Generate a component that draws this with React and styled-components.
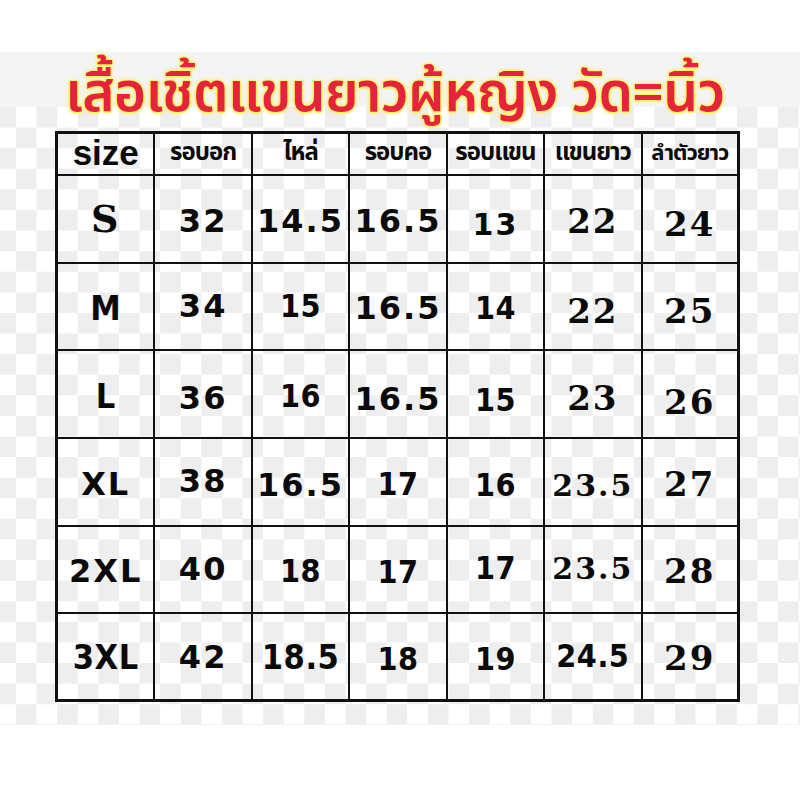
import React from 'react'
import styled, { createGlobalStyle } from 'styled-components'

const GlobalStyle = createGlobalStyle`
  html, body {
    margin: 0;
    padding: 0;
    background: #fff;
  }
`

const Page = styled.div`
  width: 800px;
  height: 800px;
  padding-top: 52px;
  box-sizing: border-box;
  background: #fff;
`

const Sheet = styled.div`
  height: 673px;
  box-sizing: border-box;
  border-bottom: 1px solid #f2f2f2;
  background-color: #fff;
  background-image:
    linear-gradient(#f4f4f4, #f4f4f4),
    repeating-conic-gradient(#fff 0 25%, #eeeeee 0 50%);
  background-size: 100% 55px, 41.2px 41.2px;
  background-position: 0 0, -4.6px 55px;
  background-repeat: no-repeat, repeat;
`

const Title = styled.h1`
  margin: 0;
  height: 79px;
  padding-right: 10px;
  box-sizing: border-box;
  text-align: center;
  font-family: "Noto Sans Thai", "Noto Sans", "DejaVu Sans", sans-serif;
  font-weight: 600;
  font-size: 55px;
  letter-spacing: -0.6px;
  line-height: 86px;
  color: #e5243b;
  text-shadow:
    1.5px 0 0 #fff36b, -1.5px 0 0 #fff36b,
    0 1.5px 0 #fff36b, 0 -1.5px 0 #fff36b,
    0 0 5px #ffe94a;
`

const Table = styled.div`
  margin-left: 55px;
  width: 685px;
  height: 571px;
  box-sizing: border-box;
  display: grid;
  grid-template-columns: repeat(7, 1fr);
  grid-template-rows: 42px repeat(6, 1fr);
  border-top: 3px solid #111;
  border-left: 3px solid #111;
`

const Cell = styled.div`
  display: flex;
  align-items: center;
  justify-content: center;
  box-sizing: border-box;
  border-right: ${p => (p.$last ? 3 : 2.5)}px solid #111;
  border-bottom: ${p => (p.$bottom ? 3 : 2.5)}px solid #111;
  color: #0a0a0a;
  white-space: nowrap;
  overflow: visible;
`

const HeadText = styled.span`
  font-family: "Noto Sans Thai", "Noto Sans", "DejaVu Sans", sans-serif;
  font-weight: 700;
  font-size: ${p => p.$size || 24}px;
  letter-spacing: -1px;
  transform: translateY(-1px);
`

const SizeHead = styled.span`
  font-family: "Liberation Sans", Arial, sans-serif;
  font-weight: 700;
  font-size: 35px;
  transform: translateY(-1px);
`

const faces = {
  wide: `font-family: "DejaVu Sans", sans-serif; letter-spacing: 2px;`,
  narrow: `font-family: "DejaVu Sans Condensed", "DejaVu Sans", sans-serif; letter-spacing: 0.5px;`,
  serif: `font-family: "DejaVu Serif", serif; letter-spacing: 2px;`,
}

const Value = styled.span`
  ${p => faces[p.$face]}
  font-weight: 700;
  font-size: ${p => p.$size || 32}px;
  transform: translateY(${p => p.$dy ?? 2}px);
`

const headers = ['รอบอก', 'ไหล่', 'รอบคอ', 'รอบแขน', 'แขนยาว', 'ลำตัวยาว']

const rows = [
  [['S', 'serif', 38, 0], ['32', 'wide'], ['14.5', 'wide'], ['16.5', 'wide'], ['13', 'wide', 30, 6], ['22', 'serif', 34, 2], ['24', 'serif', 34, 5]],
  [['M', 'narrow', 34, 2], ['34', 'wide', 32, 0], ['15', 'narrow', 32, 0], ['16.5', 'wide'], ['14', 'narrow'], ['22', 'serif', 34, 5], ['25', 'serif', 34, 5]],
  [['L', 'narrow', 34, 2], ['36', 'wide', 32, 4], ['16', 'narrow'], ['16.5', 'wide', 32, 5], ['15', 'narrow', 32, 6], ['23', 'serif', 34, 4], ['26', 'serif', 34, 8]],
  [['XL', 'wide', 32, 2], ['38', 'wide', 32, -1], ['16.5', 'wide', 32, 3], ['17', 'narrow'], ['16', 'narrow', 32, 3], ['23.5', 'serif', 30, 4], ['27', 'serif', 34, 2]],
  [['2XL', 'wide', 32, 2], ['40', 'wide', 32, 0], ['18', 'narrow', 32, 2], ['17', 'narrow', 32, 3], ['17', 'narrow', 32, -1], ['23.5', 'serif', 30, -1], ['28', 'serif', 34, 2]],
  [['3XL', 'narrow', 34, 0], ['42', 'wide', 32, 0], ['18.5', 'narrow', 34, 0], ['18', 'narrow', 32, 2], ['19', 'narrow', 32, 2], ['24.5', 'narrow', 32, -1], ['29', 'serif', 34, 1]],
]

export default function App() {
  return (
    <Page>
      <GlobalStyle />
      <Sheet>
        <Title>เสื้อเชิ้ตแขนยาวผู้หญิง วัด=นิ้ว</Title>
        <Table>
          <Cell>
            <SizeHead>size</SizeHead>
          </Cell>
          {headers.map((h, i) => (
            <Cell key={h} $last={i === headers.length - 1}>
              <HeadText $size={i === 5 ? 22 : 24}>{h}</HeadText>
            </Cell>
          ))}
          {rows.map((row, r) =>
            row.map(([text, face, size, dy], c) => (
              <Cell key={`${r}-${c}`} $last={c === 6} $bottom={r === rows.length - 1}>
                <Value $face={face} $size={size} $dy={dy}>
                  {text}
                </Value>
              </Cell>
            ))
          )}
        </Table>
      </Sheet>
    </Page>
  )
}
